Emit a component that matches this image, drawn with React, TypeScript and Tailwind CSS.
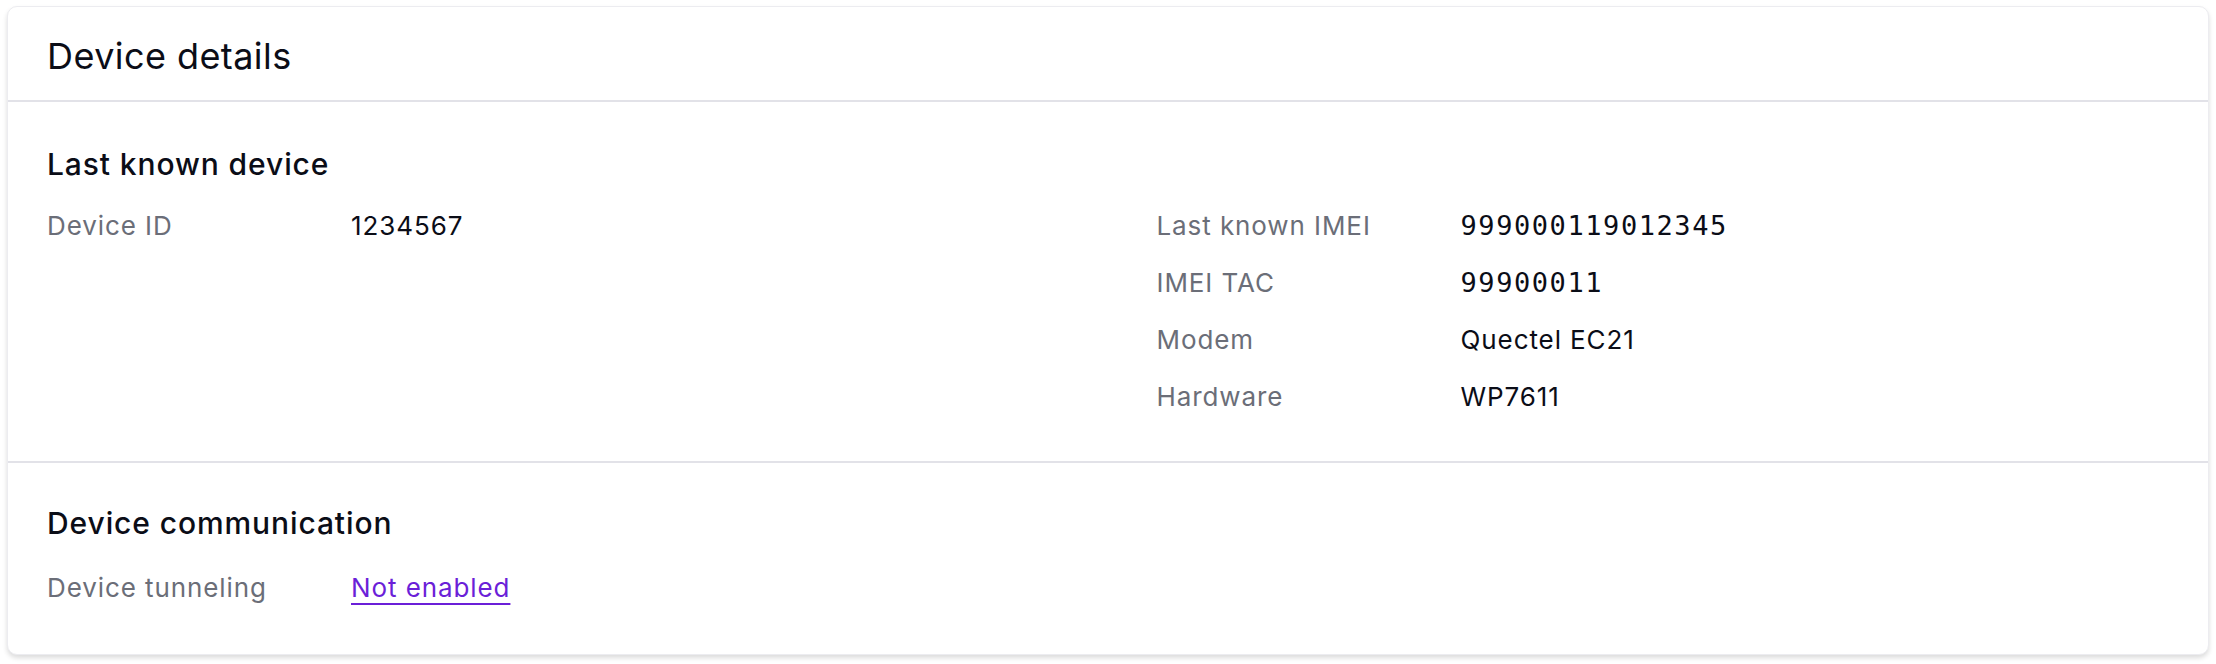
const font = { fontFamily: "Inter, 'Noto Sans', sans-serif" };

type Row = { label: string; value: string; mono?: boolean; link?: boolean };

function DetailRows({ rows }: { rows: Row[] }) {
  return (
    <dl className="flex flex-col gap-[19px]">
      {rows.map((row) => (
        <div key={row.label} className="flex items-center text-[26px] leading-[38px] tracking-[0.035em]">
          <dt className="w-[304px] shrink-0 text-[#6b6e78]">{row.label}</dt>
          <dd
            className={
              row.mono
                ? "font-['DejaVu_Sans_Mono','Liberation_Mono',monospace] text-[27px] tracking-[0.058em] text-[#0b0d17]"
                : row.link
                  ? "text-[#6b1fd8] underline decoration-[2px] underline-offset-[6px]"
                  : "text-[#0b0d17]"
            }
          >
            {row.value}
          </dd>
        </div>
      ))}
    </dl>
  );
}

function Section({ title, children, last }: { title: string; children: React.ReactNode; last?: boolean }) {
  return (
    <section
      className={
        last
          ? "px-[39px] pt-[42px] pb-[47px]"
          : "border-b-2 border-[#e2e2e8] px-[39px] pt-[44px] pb-[45px]"
      }
    >
      <h3
        className={`${last ? "mb-[28px]" : "mb-[25px]"} text-[30px] font-medium leading-[36px] tracking-[0.03em] text-[#0b0d17]`}
      >
        {title}
      </h3>
      {children}
    </section>
  );
}

export default function App() {
  return (
    <div className="min-h-screen bg-white px-[7px] pt-[6px]" style={font}>
      <div className="overflow-hidden rounded-[10px] border border-[#ececf0] bg-white shadow-[0_3px_5px_rgba(0,0,0,0.14)]">
        <header className="border-b-2 border-[#e2e2e8] px-[39px] pt-[27px] pb-[22px]">
          <h2 className="text-[36px] font-normal leading-[44px] tracking-[0.012em] text-[#0b0d17]">Device details</h2>
        </header>

        <Section title="Last known device">
          <div className="grid grid-cols-2 gap-x-[97px]">
            <DetailRows rows={[{ label: "Device ID", value: "1234567" }]} />
            <DetailRows
              rows={[
                { label: "Last known IMEI", value: "999000119012345", mono: true },
                { label: "IMEI TAC", value: "99900011", mono: true },
                { label: "Modem", value: "Quectel EC21" },
                { label: "Hardware", value: "WP7611" },
              ]}
            />
          </div>
        </Section>

        <Section title="Device communication" last>
          <DetailRows rows={[{ label: "Device tunneling", value: "Not enabled", link: true }]} />
        </Section>
      </div>
    </div>
  );
}
